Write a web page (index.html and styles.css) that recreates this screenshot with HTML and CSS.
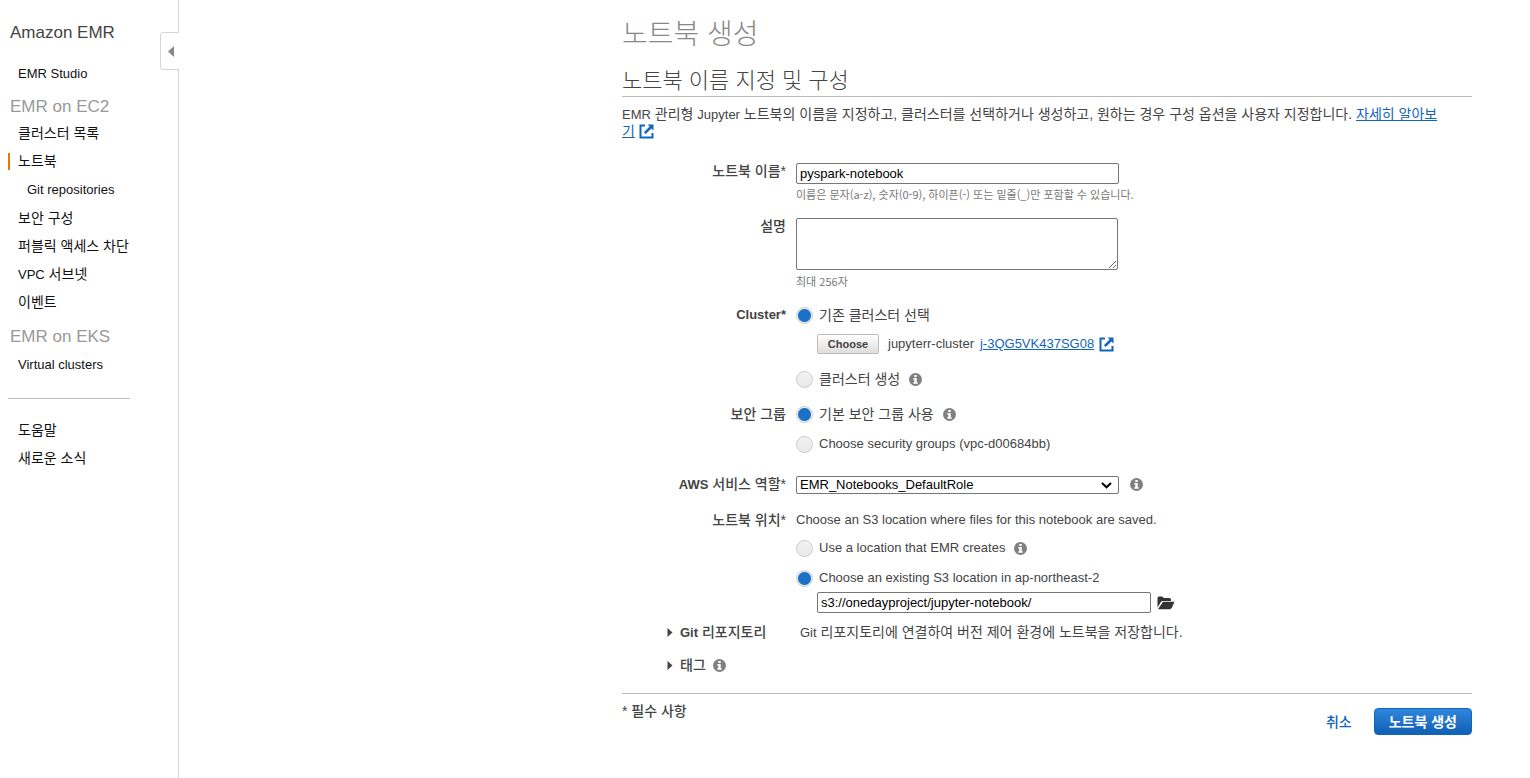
FILE: index.html
```html
<!DOCTYPE html>
<html lang="ko">
<head>
<meta charset="utf-8">
<title>노트북 생성</title>
<link rel="stylesheet" href="styles.css">
</head>
<body>
<svg class="defs" aria-hidden="true">
  <symbol id="external" viewBox="0 0 15 15">
    <path d="M6 1.500H1.500V13.500H13.500V9" fill="none" stroke="currentColor" stroke-width="2"/>
    <path d="M8.500 .5H14.500V6.500L12.400 4.400L6.700 10.100L4.900 8.300L10.600 2.600Z" fill="currentColor"/>
  </symbol>
  <symbol id="info" viewBox="0 0 13 13">
    <circle cx="6.500" cy="6.500" r="6.500" fill="#808080"/>
    <path d="M5.300 2H7.700V4H5.300ZM4.300 5H7.700V9.300H8.700V10.800H4.300V9.300H5.300V6.500H4.300Z" fill="#fff"/>
  </symbol>
  <symbol id="folder" viewBox="0 0 17 14">
    <path d="M0 12V2Q0 .5 1.500 .5H4.500Q6 .5 6 2H12Q13.500 2 13.500 3.500V5H5.500Q4 5 3.200 6.200L0 11.500Z" fill="#333"/>
    <path d="M5.500 5.800H17L14.500 11.500Q13.500 13.200 12 13.200H.5Z" fill="#333"/>
  </symbol>
</svg>
<div class="page">
  <nav class="sidebar">
    <button class="collapse" type="button" aria-label="접기"><svg viewBox="0 0 6 11"><path d="M6 0V11L0 5.500Z" fill="#888"/></svg></button>
    <h2 class="service">Amazon EMR</h2>
    <ul class="menu">
      <li><a href="#">EMR Studio</a></li>
    </ul>
    <h3 class="group">EMR on EC2</h3>
    <ul class="menu">
      <li class="ko"><a href="#">클러스터 목록</a></li>
      <li class="ko current"><a href="#">노트북</a></li>
      <li class="nested"><a href="#">Git repositories</a></li>
      <li class="ko"><a href="#">보안 구성</a></li>
      <li class="ko"><a href="#">퍼블릭 액세스 차단</a></li>
      <li class="ko"><a href="#"><span class="en">VPC</span> 서브넷</a></li>
      <li class="ko"><a href="#">이벤트</a></li>
    </ul>
    <h3 class="group group-eks">EMR on EKS</h3>
    <ul class="menu">
      <li><a href="#">Virtual clusters</a></li>
    </ul>
    <hr class="divider">
    <ul class="menu">
      <li class="ko"><a href="#">도움말</a></li>
      <li class="ko"><a href="#">새로운 소식</a></li>
    </ul>
  </nav>
  <main class="main">
    <form class="content">
      <h1 class="title">노트북 생성</h1>
      <h2 class="subtitle">노트북 이름 지정 및 구성</h2>
      <p class="intro ko"><span class="en">EMR</span> 관리형 <span class="en">Jupyter</span> 노트북의 이름을 지정하고, 클러스터를 선택하거나 생성하고, 원하는 경우 구성 옵션을 사용자 지정합니다. <a class="link" href="#">자세히 알아보기</a><svg class="external"><use href="#external"/></svg></p>

      <div class="row row-name">
        <label class="label ko" for="name">노트북 이름*</label>
        <div class="field">
          <input class="text" id="name" type="text" value="pyspark-notebook">
          <p class="hint">이름은 문자(a-z), 숫자(0-9), 하이픈(-) 또는 밑줄(_)만 포함할 수 있습니다.</p>
        </div>
      </div>
      <div class="row row-desc">
        <label class="label ko" for="desc">설명</label>
        <div class="field">
          <textarea class="area" id="desc"></textarea>
          <p class="hint">최대 256자</p>
        </div>
      </div>
      <div class="row row-cluster">
        <span class="label">Cluster*</span>
        <div>
          <div class="option"><input class="radio" type="radio" name="cluster" id="c1" checked><label class="ko" for="c1">기존 클러스터 선택</label></div>
          <div class="chosen"><button class="choose" type="button">Choose</button><span>jupyterr-cluster</span><a class="link" href="#">j-3QG5VK437SG08</a><svg class="external"><use href="#external"/></svg></div>
          <div class="option"><input class="radio" type="radio" name="cluster" id="c2"><label class="ko" for="c2">클러스터 생성</label><svg class="info"><use href="#info"/></svg></div>
        </div>
      </div>
      <div class="row row-security">
        <span class="label ko">보안 그룹</span>
        <div class="stack">
          <div class="option"><input class="radio" type="radio" name="sg" id="s1" checked><label class="ko" for="s1">기본 보안 그룹 사용</label><svg class="info"><use href="#info"/></svg></div>
          <div class="option"><input class="radio" type="radio" name="sg" id="s2"><label for="s2">Choose security groups (vpc-d00684bb)</label></div>
        </div>
      </div>
      <div class="row row-role">
        <label class="label ko" for="role"><span class="en">AWS</span> 서비스 역할*</label>
        <div class="role">
          <div class="picker"><select class="select" id="role"><option>EMR_Notebooks_DefaultRole</option></select><svg class="arrow" viewBox="0 0 11 7"><path d="M1 1L5.500 5.300L10 1" fill="none" stroke="#000" stroke-width="2"/></svg></div>
          <svg class="info"><use href="#info"/></svg>
        </div>
      </div>
      <div class="row row-location">
        <span class="label ko">노트북 위치*</span>
        <div>
          <p class="note">Choose an S3 location where files for this notebook are saved.</p>
          <div class="stack">
            <div class="option"><input class="radio" type="radio" name="loc" id="l1"><label for="l1">Use a location that EMR creates</label><svg class="info"><use href="#info"/></svg></div>
            <div class="option"><input class="radio" type="radio" name="loc" id="l2" checked><label for="l2">Choose an existing S3 location in ap-northeast-2</label></div>
          </div>
          <div class="path"><input class="text text-path" type="text" aria-label="S3 location" value="s3://onedayproject/jupyter-notebook/"><button class="browse" type="button" aria-label="Browse"><svg><use href="#folder"/></svg></button></div>
        </div>
      </div>
      <div class="row row-git">
        <button class="expander ko" type="button"><svg viewBox="0 0 5 9"><path d="M0 0V9L5 4.500Z" fill="#444"/></svg><span><span class="en">Git</span> 리포지토리</span></button>
        <p class="about ko"><span class="en">Git</span> 리포지토리에 연결하여 버전 제어 환경에 노트북을 저장합니다.</p>
      </div>
      <div class="row row-tags">
        <button class="expander ko" type="button"><svg viewBox="0 0 5 9"><path d="M0 0V9L5 4.500Z" fill="#444"/></svg><span>태그</span><svg class="info"><use href="#info"/></svg></button>
      </div>
      <footer class="footer">
        <p class="required ko">* 필수 사항</p>
        <div class="actions">
          <button class="cancel ko" type="button">취소</button>
          <button class="submit ko" type="button">노트북 생성</button>
        </div>
      </footer>
    </form>
  </main>
</div>
</body>
</html>
```
FILE: styles.css
```css
* { box-sizing: border-box; }
body {
  margin: 0;
  background: #fff;
  color: #444;
  font-family: "Liberation Sans", "Noto Sans CJK KR", sans-serif;
  font-size: 13px;
  line-height: 20px;
}
h1, h2, h3, p, ul { margin: 0; padding: 0; font-weight: 400; }
button, input, select, textarea { font: inherit; margin: 0; }
.defs { position: absolute; width: 0; height: 0; }
.ko { font-size: 14px; }
.en { font-size: 13px; }
.page { display: flex; min-height: 100vh; }

.sidebar {
  position: relative;
  flex: none;
  width: 179px;
  padding: 23px 48px 0 8px;
  border-right: 1px solid #d5d5d5;
}
.collapse {
  position: absolute;
  top: 32px;
  right: -1px;
  display: flex;
  align-items: center;
  justify-content: center;
  width: 19px;
  height: 38px;
  padding: 0;
  border: 1px solid #d5d5d5;
  border-right: 0;
  border-radius: 4px 0 0 4px;
  background: #fff;
}
.collapse svg { width: 6px; height: 11px; margin-left: 2px; }
.service { padding-left: 2px; margin-bottom: 17px; font-size: 17px; }
.group { margin: 9px 0 2px; padding-left: 2px; font-size: 17px; color: #999; }
.group-eks { margin: 11px 0 4px; }
.menu { list-style: none; white-space: nowrap; }
.menu li { height: 28px; padding-left: 10px; line-height: 28px; }
.menu a { color: #111; text-decoration: none; }
.menu .nested { height: 29px; padding-left: 19px; line-height: 30px; }
.menu .current {
  background: linear-gradient(#e07b00, #e07b00) 0 6px / 2px 17px no-repeat;
}
.divider { height: 1px; margin: 19px 0 17px; border: 0; background: #bbb; }

.main { flex: 1; min-width: 0; padding: 0 58px 24px 24px; }
.content { max-width: 850px; margin-left: auto; }
.title { padding-top: 15px; font-size: 28px; font-weight: 300; line-height: 40px; color: #888; }
.subtitle {
  padding-top: 10px;
  border-bottom: 1px solid #bbb;
  font-size: 22px;
  font-weight: 300;
  line-height: 31px;
}
.intro { padding: 9px 26px 0 0; line-height: 17px; }
.link { color: #1166bb; text-decoration: underline; }
.external { width: 15px; height: 15px; color: #1166bb; }
.intro .external { margin-left: 4px; vertical-align: -3px; }

.row { display: grid; grid-template-columns: 164px 1fr; column-gap: 10px; }
.label { font-weight: 700; text-align: right; }
.label.ko, .expander.ko { font-weight: 500; }
.label .en, .expander .en { font-weight: 700; }
.field { padding-top: 2px; }
.text {
  display: block;
  width: 323px;
  height: 21px;
  padding: 1px 3px;
  border: 1px solid #767676;
  border-radius: 2px;
  background: #fff;
  color: #000;
}
.area {
  display: block;
  width: 322px;
  height: 52px;
  border: 1px solid #767676;
  border-radius: 2px;
}
.hint { font-family: "Noto Sans CJK KR", sans-serif; font-size: 11px; color: #777; }
.row-name { margin-top: 21px; }
.row-desc { margin-top: 12px; }
.row-desc .hint { padding-top: 1px; }
.row-cluster { margin-top: 14px; }
.row-security { margin-top: 15px; }
.row-role { margin-top: 20px; }
.row-location { margin-top: 15px; }
.row-git { margin-top: 9px; }
.row-tags { margin-top: 12px; }

.option { display: flex; align-items: center; height: 20px; }
.info { width: 13px; height: 13px; margin-left: 9px; }
.radio {
  appearance: none;
  width: 17px;
  height: 17px;
  margin-right: 6px;
  border: 1px solid #ccc;
  border-radius: 50%;
  background: linear-gradient(#f2f2f2, #e9e9e9);
}
.radio:checked { background: radial-gradient(circle, #1b70c8 0 6px, #f0f0f0 7px); }
.stack { display: grid; row-gap: 10px; }
.chosen { display: flex; align-items: center; margin: 9px 0 15px 21px; line-height: 18px; }
.choose {
  width: 62px;
  height: 20px;
  margin-right: 9px;
  padding: 0;
  border: 1px solid #bbb;
  border-radius: 2px;
  background: linear-gradient(#fff, #ddd);
  color: #444;
  font-size: 11px;
  font-weight: 700;
  line-height: 16px;
}
.chosen .link { margin: 0 5px 0 6px; }
.role { display: flex; align-items: center; }
.picker { position: relative; width: 323px; }
.select {
  display: block;
  appearance: none;
  width: 100%;
  height: 18px;
  padding: 0 3px;
  border: 1px solid #767676;
  border-radius: 2px;
  background: #fff;
  color: #000;
  line-height: 16px;
}
.arrow { position: absolute; top: 6px; right: 7px; width: 11px; height: 7px; pointer-events: none; }
.role .info { margin-left: 11px; }
.note { margin-bottom: 8px; }
.path { display: flex; align-items: center; margin: 4px 0 0 21px; }
.text-path { width: 334px; }
.browse { display: flex; margin-left: 6px; padding: 0; border: 0; background: none; }
.browse svg { width: 18px; height: 14px; }
.expander {
  display: flex;
  align-items: center;
  margin-left: 45px;
  padding: 0;
  border: 0;
  background: none;
  color: #444;
  white-space: nowrap;
}
.expander svg { width: 6px; height: 9px; margin-right: 7px; }
.expander .info { width: 13px; height: 13px; margin: 0 0 0 7px; }
.about { padding-left: 4px; }
.footer {
  display: flex;
  justify-content: space-between;
  margin-top: 18px;
  padding-top: 7px;
  border-top: 1px solid #bbb;
}
.required { font-weight: 500; }
.actions { display: flex; align-items: center; gap: 22px; padding-top: 7px; }
.cancel { padding: 0; border: 0; background: none; color: #1166bb; font-weight: 500; }
.submit {
  height: 27px;
  padding: 0 14px;
  border: 1px solid #1166bb;
  border-radius: 4px;
  background: linear-gradient(#2f86dd, #1060b4);
  color: #fff;
  font-weight: 700;
  line-height: 24px;
}
```
